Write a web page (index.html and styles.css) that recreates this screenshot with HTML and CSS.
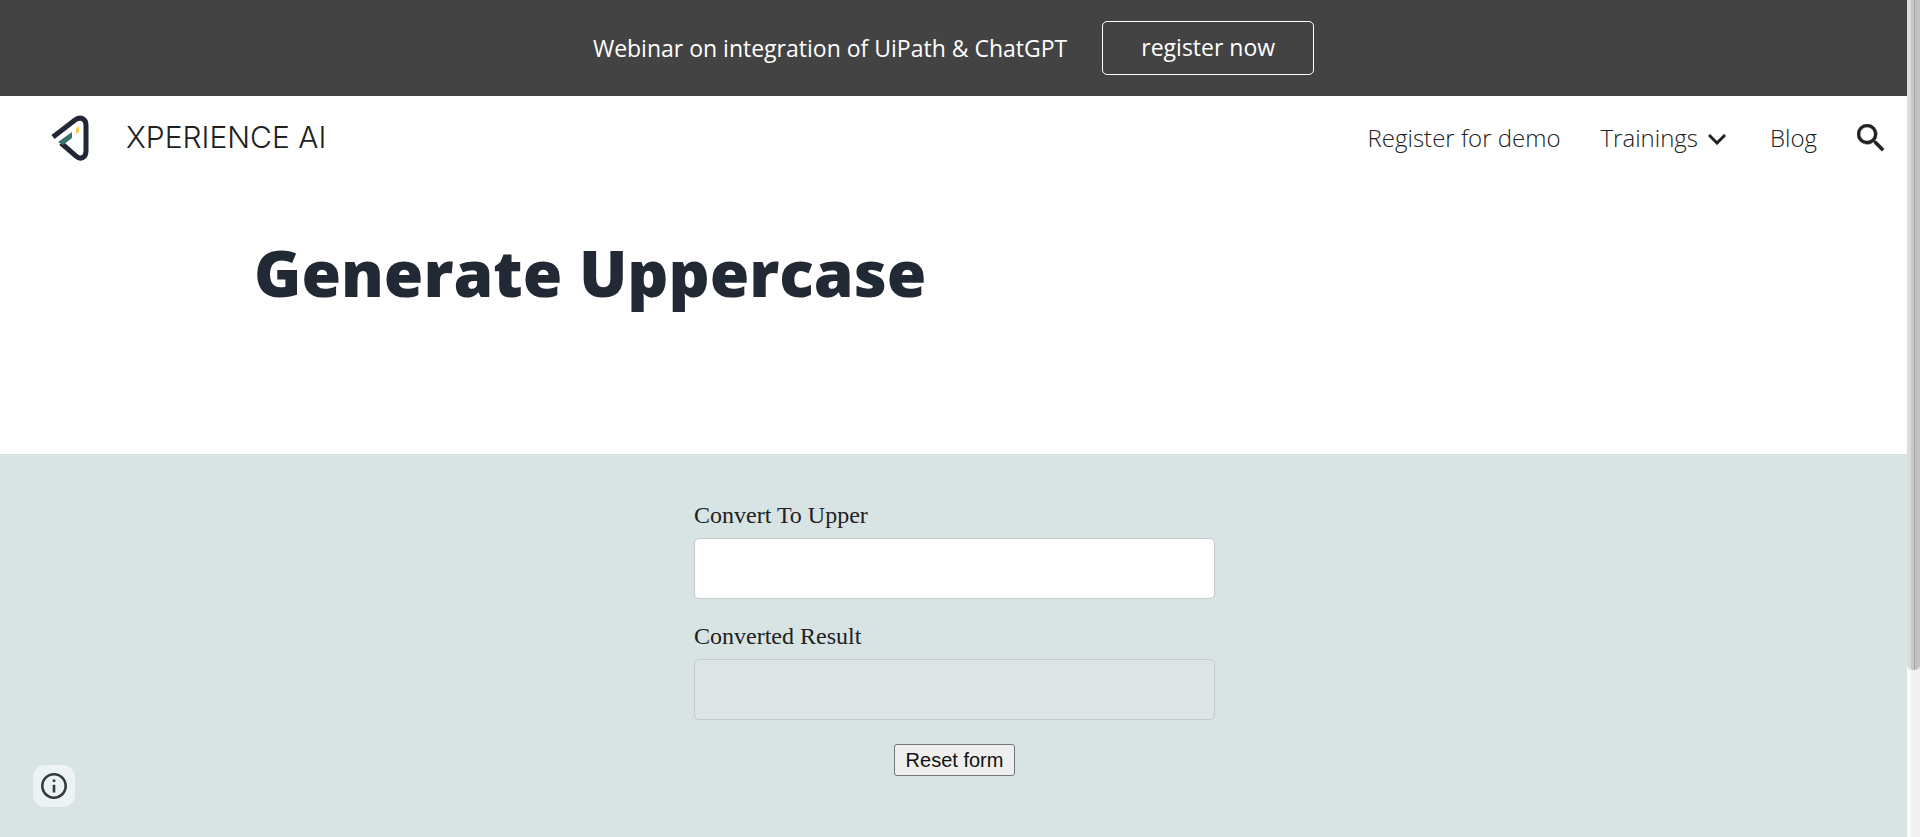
FILE: index.html
```html
<!DOCTYPE html>
<html lang="en">
<head>
<meta charset="utf-8">
<title>XPERIENCE AI - Generate Uppercase</title>
<link rel="stylesheet" href="styles.css">
</head>
<body>
<div class="page">
  <div class="banner">
    <span class="banner-text">Webinar on integration of UiPath &amp; ChatGPT</span>
    <a class="banner-button" href="#">register now</a>
  </div>
  <header class="header">
    <a class="brand" href="#">
      <svg class="logo" viewBox="0 0 40 46" aria-hidden="true">
        <path d="M3 22 25 5C31 1 36 4 36 10V36C36 43 30 45 26 41L11 28" fill="none" stroke="#222636" stroke-width="5"/>
        <path d="M8 27 22 17V23L13 30Z" fill="#39736d"/>
        <path d="M26 14 29 11V17L26 19Z" fill="#f3cd48"/>
      </svg>
      <span class="brand-name">XPERIENCE AI</span>
    </a>
    <nav class="nav">
      <a class="nav-link" href="#">Register for demo</a>
      <a class="nav-link" href="#">Trainings
        <svg class="chevron" viewBox="0 0 18 12" aria-hidden="true"><path d="M1 2 9 10 17 2" fill="none" stroke="#212121" stroke-width="3"/></svg>
      </a>
      <a class="nav-link" href="#">Blog</a>
      <button class="search" type="button" aria-label="Search">
        <svg viewBox="3 3 18 18" aria-hidden="true"><path fill="#212121" stroke="#212121" stroke-width=".3" d="M15.5 14h-.79l-.28-.27A6.47 6.47 0 0 0 16 9.5 6.5 6.5 0 1 0 9.5 16c1.61 0 3.09-.59 4.23-1.57l.27.28v.79l5 4.99L20.49 19l-4.99-5zm-6 0C7.01 14 5 11.99 5 9.5S7.01 5 9.5 5 14 7.01 14 9.5 11.99 14 9.5 14z"/></svg>
      </button>
    </nav>
  </header>
  <main class="main">
    <section class="hero"><h1 class="title">Generate Uppercase</h1></section>
    <section class="converter">
      <form class="form">
        <label class="label" for="source">Convert To Upper</label>
        <input class="field" id="source" type="text">
        <label class="label" for="result">Converted Result</label>
        <input class="field" id="result" type="text" disabled>
        <button class="reset" type="reset">Reset form</button>
      </form>
    </section>
  </main>
</div>
<div class="scrollbar" aria-hidden="true"><div class="thumb"></div></div>
<button class="info" type="button" aria-label="Page details">
  <svg viewBox="2 2 20 20" aria-hidden="true"><path fill="#343a40" d="M11 17h2v-6h-2v6zm1-15C6.48 2 2 6.48 2 12s4.48 10 10 10 10-4.48 10-10S17.52 2 12 2zm0 18c-4.41 0-8-3.59-8-8s3.59-8 8-8 8 3.59 8 8-3.59 8-8 8zM11 9h2V7h-2v2z"/></svg>
</button>
</body>
</html>
```
FILE: styles.css
```css
* { box-sizing: border-box; }
body {
  margin: 0;
  min-height: 100vh;
  display: flex;
  background: #fff;
  font-family: "Open Sans", "Noto Sans", sans-serif;
  color: #212121;
}
a { color: inherit; text-decoration: none; }
.page { flex: 1; display: flex; flex-direction: column; }
.banner {
  display: flex;
  align-items: center;
  justify-content: center;
  gap: 35px;
  padding: 21px 24px;
  background: #434343;
  color: #fff;
  font-size: 23px;
}
.banner-button {
  display: block;
  padding: 0 38px 2px;
  border: 1px solid #fff;
  border-radius: 5px;
  line-height: 50px;
}
.header {
  display: flex;
  align-items: center;
  justify-content: space-between;
  padding: 0 22px 0 50px;
  height: 84px;
  font-weight: 300;
}
.brand { display: flex; align-items: center; gap: 36px; }
.logo { width: 40px; height: 46px; }
.brand-name { padding-bottom: 2px; font-family: Inter, sans-serif; font-size: 30px; }
.nav { display: flex; align-items: center; gap: 40px; font-size: 24px; }
.nav-link { display: flex; align-items: center; gap: 10px; padding-bottom: 2px; }
.chevron { width: 18px; height: 12px; margin: 4px 4px 0 0; }
.search { padding: 0; border: 0; background: none; display: flex; }
.search svg { width: 28px; height: 28px; }
.main { flex: 1; display: flex; flex-direction: column; }
.hero { padding: 39px 254px 127px; }
.title {
  margin: 0;
  font-size: 64px;
  font-weight: 800;
  line-height: 108px;
  color: #212934;
}
.converter {
  flex: 1;
  display: flex;
  justify-content: center;
  align-items: flex-start;
  padding: 43px 23px 44px 25px;
  background: #d8e4e3;
}
.form { width: 100%; max-width: 521px; display: flex; flex-direction: column; }
.label {
  font-family: "Liberation Serif", serif;
  font-size: 24px;
  line-height: 36px;
  margin-bottom: 5px;
}
.field {
  width: 100%;
  height: 61px;
  margin-bottom: 19px;
  padding: 8px 16px;
  border: 1px solid #c3c9cd;
  border-radius: 5px;
  background: #fff;
  font-family: "Liberation Serif", serif;
  font-size: 24px;
}
.field:disabled { background: #dde5e6; }
.reset {
  align-self: center;
  margin-top: 5px;
  padding: 0 11px;
  height: 32px;
  border: 1px solid #767676;
  border-radius: 3px;
  background: #efefef;
  color: #111;
  font-family: "Liberation Sans", sans-serif;
  font-size: 20px;
}
.scrollbar { width: 13px; border-left: 4px solid #fafdfd; background: #f0f0f0; }
.thumb {
  height: 80vh;
  margin-left: -4px;
  border-left: 4px solid #dcdcdc;
  border-radius: 0 0 5px 5px;
  background: linear-gradient(to right, #c8c8c8 3px, #a3a3a3 3px, #a3a3a3 4px, #c2c2c2 4px);
}
.info {
  position: fixed;
  left: 33px;
  bottom: 30px;
  width: 42px;
  height: 42px;
  display: grid;
  place-items: center;
  padding: 0;
  border: 0;
  border-radius: 12px;
  background: #edf3f4;
}
.info svg { width: 26px; height: 26px; }
```
